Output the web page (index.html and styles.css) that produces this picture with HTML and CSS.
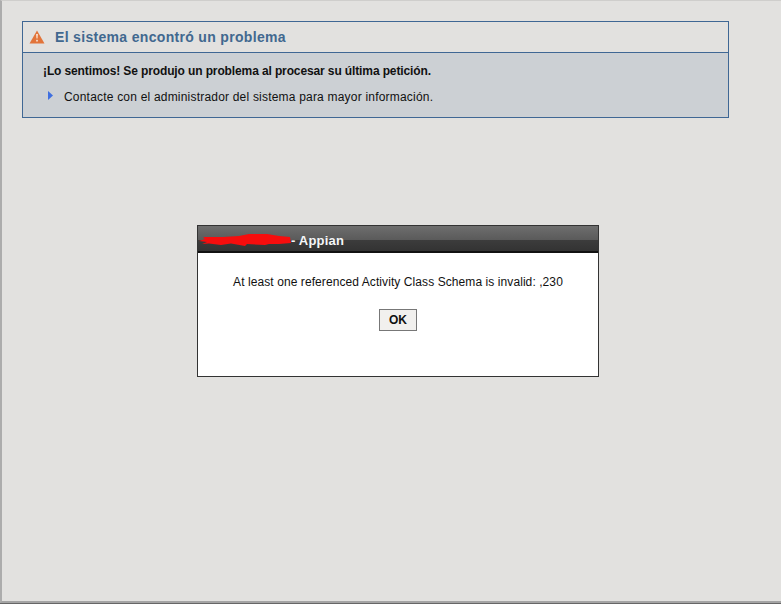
FILE: index.html
```html
<!DOCTYPE html>
<html lang="es">
<head>
<meta charset="utf-8">
<title>Appian</title>
<link rel="stylesheet" href="styles.css">
</head>
<body>
<div class="page">
  <section class="error-box">
    <header class="error-head">
      <svg class="warn" width="16" height="14" viewBox="0 0 16 14" aria-hidden="true">
        <path d="M8 0.5 L15.5 13.5 H0.5 Z" fill="#e2743a"/>
        <path d="M7.1 4 H8.9 L8.5 8.6 H7.5 Z" fill="#fbe6d8"/>
        <rect x="7.2" y="9.8" width="1.6" height="1.7" fill="#fbe6d8"/>
      </svg>
      <h1 class="error-title">El sistema encontró un problema</h1>
    </header>
    <div class="error-body">
      <p class="error-lead">¡Lo sentimos! Se produjo un problema al procesar su última petición.</p>
      <div class="error-item">
        <svg class="arrow" width="5" height="9" viewBox="0 0 5 9" aria-hidden="true"><path d="M0 0 L5 4.5 L0 9 Z" fill="#3f6fe0"/></svg>
        <span>Contacte con el administrador del sistema para mayor información.</span>
      </div>
    </div>
  </section>
  <section class="dialog">
    <header class="dialog-head">
      <span class="redact">
        <svg width="92" height="13" viewBox="0 0 92 13" aria-hidden="true">
          <path d="M4 3 L24 3 L40 2 L50 0 L68 0 L80 2 L91 3 L92 9 L80 10 L70 10 L66 11 L48 10 L46 12 L32 9.5 L22 11 L10 9.5 L3 10 L8 8 L0 7 L6 5 Z" fill="#f60d0d"/>
        </svg>
      </span>
      <span class="dialog-title">- Appian</span>
    </header>
    <div class="dialog-body">
      <p class="dialog-msg">At least one referenced Activity Class Schema is invalid: ,230</p>
      <button class="ok" type="button">OK</button>
    </div>
  </section>
</div>
</body>
</html>
```
FILE: styles.css
```css
html, body {
  margin: 0;
  padding: 0;
  height: 100%;
  background: #fff;
  overflow: hidden;
}
body {
  font-family: "Liberation Sans", Arial, sans-serif;
  color: #111;
}
.page {
  box-sizing: border-box;
  height: 603px;
  background: #e2e1df;
  border-top: 1px solid #cfcecc;
  border-left: 2px solid #acacac;
  border-bottom: 2px solid #a4a4a4;
  box-shadow: 0 1px 0 #666;
  padding: 20px 0 0 20px;
  display: flex;
  flex-direction: column;
}
.error-box {
  box-sizing: border-box;
  width: 707px;
  height: 97px;
  border: 1px solid #3f6794;
  background: #ccd0d4;
}
.error-head {
  box-sizing: border-box;
  height: 31px;
  background: #e2e1df;
  border-bottom: 1px solid #3f6794;
  display: flex;
  align-items: center;
  padding-left: 6px;
  gap: 10px;
}
.error-title {
  margin: 0;
  font-size: 14px;
  font-weight: bold;
  letter-spacing: 0.32px;
  color: #41688f;
}
.error-body {
  padding: 11px 0 0 20px;
  font-size: 12px;
}
.error-lead {
  margin: 0;
  font-weight: bold;
  line-height: 14px;
  letter-spacing: -0.12px;
}
.error-item {
  display: flex;
  align-items: center;
  margin-top: 12px;
  padding-left: 5px;
  gap: 11px;
  line-height: 14px;
  letter-spacing: 0.2px;
}
.arrow {
  margin-top: -4px;
}
.dialog {
  box-sizing: border-box;
  width: 402px;
  height: 152px;
  margin: 107px 0 0 175px;
  border: 1px solid #333;
  background: #fff;
}
.dialog-head {
  position: relative;
  box-sizing: border-box;
  height: 27px;
  background: linear-gradient(#6e6e6e 0, #5a5a5a 14px, #3c3c3c 14px, #333 25px, #111 25px);
  display: flex;
  align-items: center;
  padding-left: 93px;
}
.redact {
  position: absolute;
  left: 1px;
  top: 8px;
  line-height: 0;
}
.dialog-title {
  color: #f4f6f8;
  font-size: 13px;
  font-weight: bold;
  letter-spacing: 0.2px;
  margin-top: 2px;
}
.dialog-body {
  display: flex;
  flex-direction: column;
  align-items: center;
}
.dialog-msg {
  margin: 22px 0 0;
  font-size: 12px;
  line-height: 14px;
  letter-spacing: 0.08px;
}
.ok {
  box-sizing: border-box;
  width: 38px;
  height: 22px;
  margin-top: 20px;
  padding: 0;
  border: 1px solid #777;
  background: #f1f0ee;
  color: #111;
  font: bold 12px "Liberation Sans", Arial, sans-serif;
}
```
